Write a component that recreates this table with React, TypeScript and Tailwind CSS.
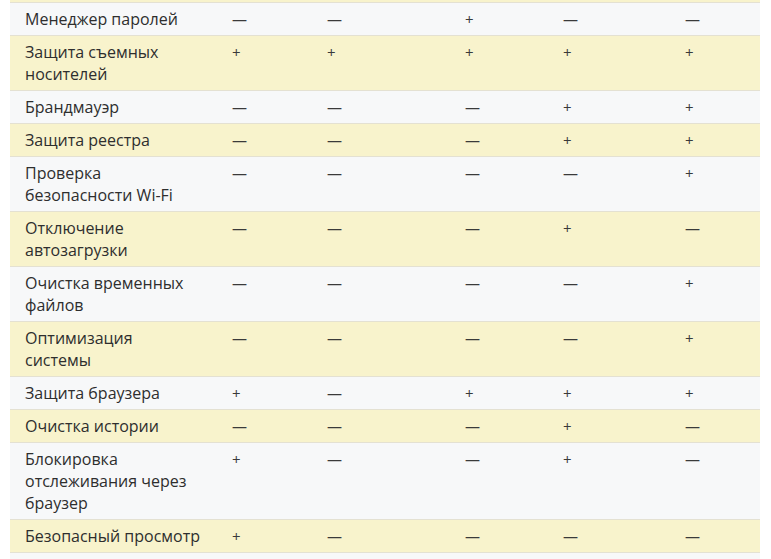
import React from "react";

type Row = { name: string[]; marks: string[] };

const P = "+";
const D = "—";

const rows: Row[] = [
  { name: ["Менеджер паролей"], marks: [D, D, P, D, D] },
  { name: ["Защита съемных", "носителей"], marks: [P, P, P, P, P] },
  { name: ["Брандмауэр"], marks: [D, D, D, P, P] },
  { name: ["Защита реестра"], marks: [D, D, D, P, P] },
  { name: ["Проверка", "безопасности Wi-Fi"], marks: [D, D, D, D, P] },
  { name: ["Отключение", "автозагрузки"], marks: [D, D, D, P, D] },
  { name: ["Очистка временных", "файлов"], marks: [D, D, D, D, P] },
  { name: ["Оптимизация", "системы"], marks: [D, D, D, D, P] },
  { name: ["Защита браузера"], marks: [P, D, P, P, P] },
  { name: ["Очистка истории"], marks: [D, D, D, P, D] },
  { name: ["Блокировка", "отслеживания через", "браузер"], marks: [P, D, D, P, D] },
  { name: ["Безопасный просмотр"], marks: [P, D, D, D, D] },
];

export default function App() {
  return (
    <div
      className="w-[771px] h-[559px] overflow-hidden bg-white pl-[10px]"
      style={{ fontFamily: '"Open Sans", "Noto Sans", sans-serif' }}
    >
      <div className="w-[750px]">
        <div className="h-[2px] bg-[#f8f3cc]" />
        {rows.map((r, i) => (
          <div
            key={i}
            className={`grid grid-cols-[207px_95px_138px_98px_122px_90px] border-t border-[#e4e1d2] ${
              i % 2 === 1 ? "bg-[#f8f3cc]" : "bg-[#f7f8f9]"
            }`}
          >
            <div className="pl-[15px] py-[5px] text-[16px] leading-[22px] text-[#2e2e2e] whitespace-nowrap">
              {r.name.map((l, j) => (
                <div key={j}>{l}</div>
              ))}
            </div>
            {r.marks.map((m, j) => (
              <div
                key={j}
                className="pl-[15px] py-[5px] text-[15px] leading-[22px] text-[#3a3a3a]"
              >
                {m}
              </div>
            ))}
          </div>
        ))}
        <div className="h-[20px] border-t border-[#e4e1d2] bg-[#f7f8f9]" />
      </div>
    </div>
  );
}
